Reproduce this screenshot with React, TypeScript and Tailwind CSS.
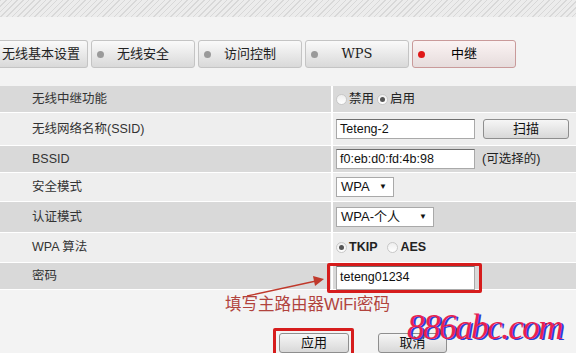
import React from 'react';

const font = "font-['Liberation_Sans','Noto_Sans_CJK_SC',sans-serif]";

const Tab = ({ label, active, dot = true, className = '' }: { label: string; active?: boolean; dot?: boolean; className?: string }) => (
  <div
    className={`relative flex h-[28px] items-center justify-center rounded-[3px] border text-[13px] ${
      active
        ? 'border-[#c99a9a] bg-gradient-to-b from-[#fbf3f3] to-[#e6dcdc] text-black'
        : 'border-[#c4c4c4] bg-gradient-to-b from-[#fafafa] to-[#d9d9d9] text-[#222]'
    } ${className}`}
  >
    {dot && (
      <span
        className={`absolute left-[5px] top-[10px] h-[7px] w-[7px] rounded-full ${active ? 'bg-[#e01818]' : 'bg-[#9a9a9a]'}`}
      />
    )}
    {label}
  </div>
);

const Radio = ({ checked }: { checked?: boolean }) => (
  <span className="mr-[2px] inline-flex h-[11px] w-[11px] items-center justify-center rounded-full border border-[#c8c8c8] bg-gradient-to-b from-[#eeeeee] to-white">
    {checked && <span className="h-[5px] w-[5px] rounded-full bg-[#555]" />}
  </span>
);

const Row = ({ label, h, dark, children }: { label: string; h: string; dark?: boolean; children?: React.ReactNode }) => (
  <div className={`flex ${h} border-b border-white ${dark ? 'bg-[#d9d9d9]' : 'bg-[#eeeeee]'}`}>
    <div className="flex w-[331px] items-center pl-[32px] text-[12.5px] text-[#333]">{label}</div>
    <div className="w-[2px] bg-white" />
    <div className="relative flex flex-1 items-center pl-[3px] text-[12.5px] text-[#222]">{children}</div>
  </div>
);

const TextBox = ({ value, w = 'w-[139px]', h = 'h-[20px]' }: { value: string; w?: string; h?: string }) => (
  <div className={`flex ${w} ${h} items-center border border-[#a9a9a9] border-t-[#6f6f6f] bg-white px-[3px] text-[12.5px] text-[#111]`}>
    {value}
  </div>
);

const Select = ({ value, w }: { value: string; w: string }) => (
  <div className={`flex ${w} h-[20px] items-center justify-between border border-[#a9a9a9] bg-white pl-[4px] pr-[6px] text-[13px] text-[#111]`}>
    <span>{value}</span>
    <span className="text-[8px]">▼</span>
  </div>
);

const Btn = ({ label, w }: { label: string; w: string }) => (
  <div className={`flex ${w} h-[20px] items-center justify-center rounded-[3px] border border-[#8e8e8e] bg-gradient-to-b from-[#f6f6f6] to-[#d8d8d8] text-[13px] text-[#111]`}>
    {label}
  </div>
);

export default function App() {
  return (
    <div className={`relative h-[353px] w-[576px] overflow-hidden bg-[#f3f3f3] ${font}`}>
      <div className="h-[17px] bg-[repeating-linear-gradient(135deg,#d8d8d8_0px,#d8d8d8_1px,#ececec_1px,#ececec_4px)]" />
      <div className="flex gap-[3px] pt-[23px]">
        <Tab label="无线基本设置" dot={false} className="w-[88px] justify-start rounded-l-none border-l-0 pl-[2px]" />
        <Tab label="无线安全" className="w-[104px]" />
        <Tab label="访问控制" className="w-[104px]" />
        <Tab label="WPS" className="w-[104px] font-['DejaVu_Serif',serif] text-[10px]" />
        <Tab label="中继" active className="w-[104px]" />
      </div>
      <div className="mt-[18px]">
        <Row label="无线中继功能" h="h-[27px]" dark>
          <Radio />
          <span className="mr-[3px]">禁用</span>
          <Radio checked />
          <span>启用</span>
        </Row>
        <Row label="无线网络名称(SSID)" h="h-[33px]">
          <TextBox value="Teteng-2" />
          <div className="ml-[8px]">
            <Btn label="扫描" w="w-[86px]" />
          </div>
        </Row>
        <Row label="BSSID" h="h-[27px]" dark>
          <TextBox value="f0:eb:d0:fd:4b:98" />
          <span className="ml-[7px]">(可选择的)</span>
        </Row>
        <Row label="安全模式" h="h-[29px]">
          <Select value="WPA" w="w-[58px]" />
        </Row>
        <Row label="认证模式" h="h-[31px]" dark>
          <Select value="WPA-个人" w="w-[98px]" />
        </Row>
        <Row label="WPA 算法" h="h-[30px]">
          <Radio checked />
          <span className="mr-[10px] font-bold">TKIP</span>
          <Radio />
          <span className="font-bold">AES</span>
        </Row>
        <Row label="密码" h="h-[27px]" dark>
          <div className="mt-[3px]">
            <TextBox value="teteng01234" h="h-[24px]" />
          </div>
          <div className="absolute left-[-6px] top-0 h-[30px] w-[155px] rounded-[2px] border-[3px] border-[#d61c1c]" />
        </Row>
      </div>
      <div className="pl-[225px] pt-[4px] text-[16.5px] leading-[20px] text-[#b1433d]">填写主路由器WiFi密码</div>
      <div className="flex gap-[29px] pl-[279px] pt-[19px]">
        <div className="relative">
          <Btn label="应用" w="w-[70px]" />
          <div className="absolute left-[-6px] top-[-5px] h-[40px] w-[81px] rounded-[2px] border-[3px] border-[#d61c1c]" />
        </div>
        <Btn label="取消" w="w-[69px]" />
      </div>
      <svg className="absolute left-0 top-0" width="576" height="353">
        <line x1="247" y1="296" x2="316" y2="281" stroke="#c0392b" strokeWidth="1.3" />
        <polygon points="324,279 313,276 315,286" fill="#c0392b" />
      </svg>
      <div className="absolute left-[407px] top-[308px] font-['Liberation_Serif',serif] text-[35px] italic leading-[40px] tracking-[-1.5px] text-[#e8224f] [text-shadow:2px_1px_0_#2a3fd8]">
        886abc.com
      </div>
    </div>
  );
}
